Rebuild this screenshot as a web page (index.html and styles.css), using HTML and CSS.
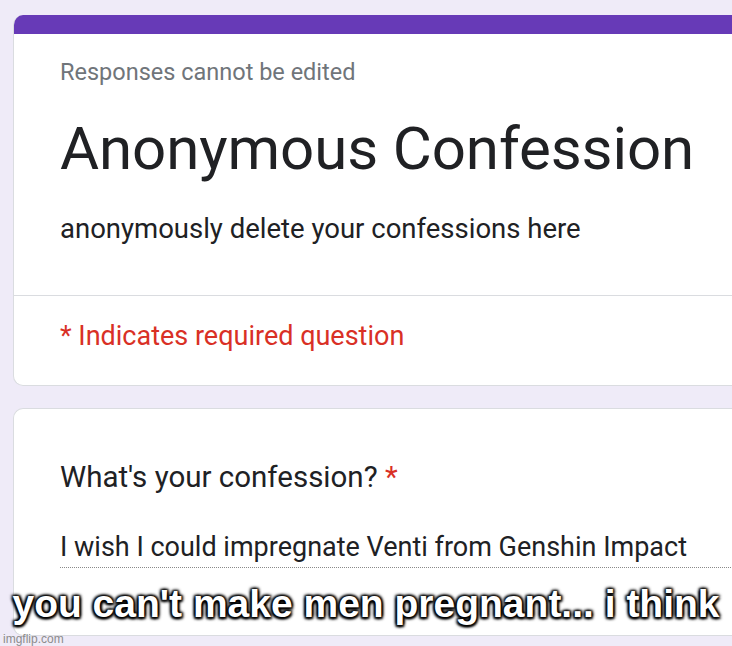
FILE: index.html
```html
<!DOCTYPE html>
<html>
<head>
<meta charset="utf-8">
<link rel="stylesheet" href="styles.css">
</head>
<body>
<div class="page">
  <div class="card header-card">
    <div class="topbar"></div>
    <div class="head">
      <div class="note">Responses cannot be edited</div>
      <div class="title">Anonymous Confession</div>
      <div class="desc">anonymously delete your confessions here</div>
    </div>
    <div class="required">* Indicates required question</div>
  </div>
  <div class="card q-card">
    <div class="question">What's your confession? <span class="star">*</span></div>
    <div class="answer">I wish I could impregnate Venti from Genshin Impact</div>
  </div>
</div>
<div class="caption">you can't make men pregnant... i think</div>
<div class="watermark">imgflip.com</div>
</body>
</html>
```
FILE: styles.css
```css
html, body {
  margin: 0;
  padding: 0;
}
body {
  width: 732px;
  height: 646px;
  overflow: hidden;
  background: #efebf8;
  font-family: Roboto, "Liberation Sans", sans-serif;
  position: relative;
}
.page {
  padding: 15px 0 0 13px;
  display: flex;
  flex-direction: column;
  gap: 22px;
}
.card {
  width: 760px;
  background: #fff;
  border: 1px solid #dadce0;
  border-right: none;
  border-radius: 10px 0 0 10px;
  box-sizing: border-box;
}
.header-card {
  height: 371px;
  border-top: none;
  overflow: hidden;
}
.topbar {
  height: 19px;
  background: #673ab7;
}
.head {
  height: 262px;
  padding: 24px 0 0 46px;
  box-sizing: border-box;
  border-bottom: 1px solid #dadce0;
}
.note {
  font-size: 23.5px;
  line-height: 28px;
  color: #70757a;
}
.title {
  font-size: 60px;
  line-height: 70px;
  color: #202124;
  margin-top: 28px;
  letter-spacing: -0.1px;
}
.desc {
  font-size: 27.5px;
  line-height: 32px;
  color: #202124;
  margin-top: 29px;
}
.required {
  padding: 24px 0 0 46px;
  font-size: 27px;
  line-height: 32px;
  color: #d93025;
}
.q-card {
  height: 228px;
  padding: 51px 0 0 46px;
}
.question {
  font-size: 29.5px;
  line-height: 34px;
  color: #202124;
}
.star {
  color: #d93025;
}
.answer {
  margin-top: 37px;
  font-size: 27px;
  line-height: 32px;
  color: #202124;
  padding-bottom: 4px;
  border-bottom: 1px dotted #8a8a8a;
}
.caption {
  position: absolute;
  left: 0;
  width: 732px;
  top: 580px;
  text-align: center;
  white-space: nowrap;
  font-family: "Liberation Sans", Arial, sans-serif;
  font-weight: bold;
  font-size: 39px;
  line-height: 48px;
  color: #fff;
  letter-spacing: 0;
  text-shadow: 1.5px 1.5px 2.5px #000, -1.5px -1.5px 2.5px #000, 1.5px -1.5px 2.5px #000, -1.5px 1.5px 2.5px #000, 0 0 4px #000;
}
.watermark {
  position: absolute;
  left: 3px;
  top: 632px;
  font-family: "Liberation Sans", Arial, sans-serif;
  font-size: 12px;
  line-height: 14px;
  color: #8c8c8c;
}
```
